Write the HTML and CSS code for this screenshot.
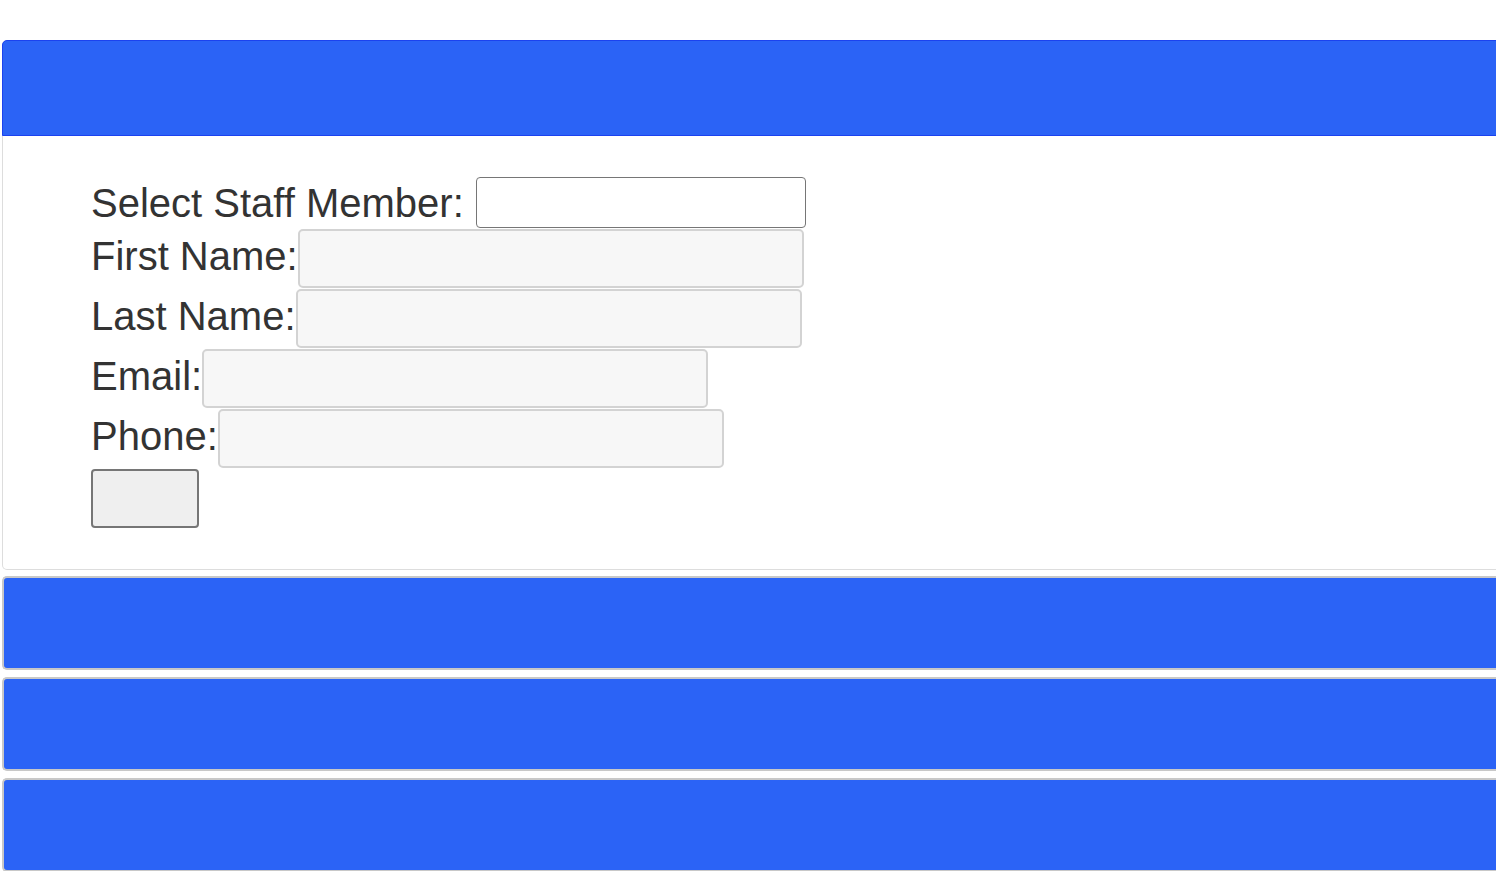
FILE: index.html
```html
<!DOCTYPE html>
<html>
<head>
<meta charset="utf-8">
<link rel="stylesheet" href="styles.css">
</head>
<body>
<div class="page">
  <section class="panel main">
    <div class="panel-head"></div>
    <div class="panel-body">
      <div class="row select-row">
        <label class="lbl">Select Staff Member:</label>
        <select class="staff"></select>
      </div>
      <div class="row">
        <label class="lbl">First Name:</label>
        <input class="field" type="text">
      </div>
      <div class="row">
        <label class="lbl">Last Name:</label>
        <input class="field" type="text">
      </div>
      <div class="row">
        <label class="lbl">Email:</label>
        <input class="field" type="text">
      </div>
      <div class="row">
        <label class="lbl">Phone:</label>
        <input class="field" type="text">
      </div>
      <div class="row">
        <button class="btn" type="button"></button>
      </div>
    </div>
  </section>
  <section class="panel collapsed"></section>
  <section class="panel collapsed"></section>
  <section class="panel collapsed"></section>
</div>
</body>
</html>
```

FILE: styles.css
```css
html, body {
  margin: 0;
  padding: 0;
  background: #ffffff;
  overflow: hidden;
}
.page {
  padding: 40px 0 0 2px;
  width: 1510px;
  display: flex;
  flex-direction: column;
  gap: 7px;
  font-family: "Liberation Sans", Arial, sans-serif;
  color: #333333;
}
.panel {
  border-radius: 5px;
  box-sizing: border-box;
}
.main {
  border: 1px solid #dddddd;
  border-top: none;
  margin-bottom: -1px;
}
.panel-head {
  height: 96px;
  box-sizing: border-box;
  background: #2b63f6;
  border: 1px solid #1b42ef;
  border-radius: 5px 5px 0 0;
  margin: 0 -1px;
}
.panel-body {
  padding: 41px 0 41px 88px;
  display: flex;
  flex-direction: column;
  gap: 1px;
}
.row {
  display: flex;
  align-items: center;
}
.lbl {
  font-size: 40px;
  line-height: 46px;
  padding-bottom: 6px;
}
.select-row .lbl {
  padding-bottom: 0;
  margin-right: 12px;
}
.staff {
  width: 330px;
  height: 51px;
  box-sizing: border-box;
  border: 1px solid #767676;
  border-radius: 4px;
  background: #ffffff;
  appearance: none;
}
.field {
  width: 506px;
  height: 59px;
  box-sizing: border-box;
  border: 2px solid #d3d3d3;
  border-radius: 5px;
  background: #f7f7f7;
  margin: 0;
  padding: 0;
}
.btn {
  width: 108px;
  height: 59px;
  box-sizing: border-box;
  background: #efefef;
  border: 2px solid #767676;
  border-radius: 4px;
  margin: 0;
}
.collapsed {
  height: 94px;
  background: #2b63f6;
  border: 2px solid #c8c8c8;
  border-right: none;
}
```
